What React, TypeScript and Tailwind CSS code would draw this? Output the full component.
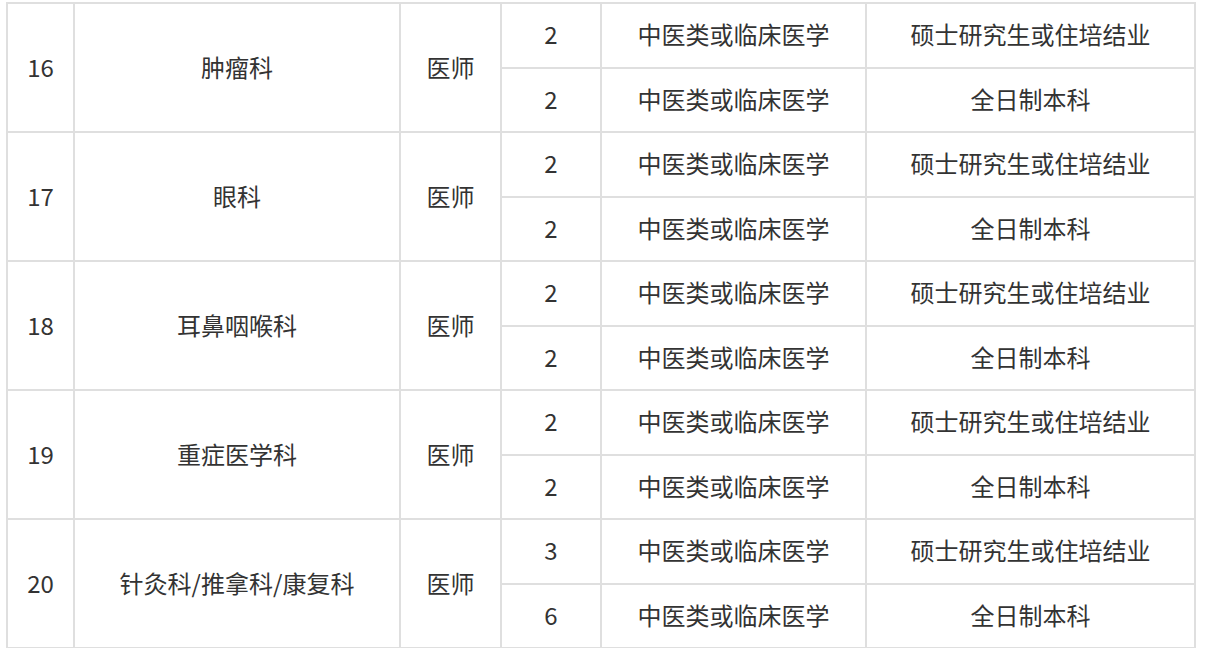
import React from "react";

type Group = {
  no: string;
  dept: string;
  role: string;
  rows: { count: string; major: string; edu: string }[];
};

const groups: Group[] = [
  {
    no: "16",
    dept: "肿瘤科",
    role: "医师",
    rows: [
      { count: "2", major: "中医类或临床医学", edu: "硕士研究生或住培结业" },
      { count: "2", major: "中医类或临床医学", edu: "全日制本科" },
    ],
  },
  {
    no: "17",
    dept: "眼科",
    role: "医师",
    rows: [
      { count: "2", major: "中医类或临床医学", edu: "硕士研究生或住培结业" },
      { count: "2", major: "中医类或临床医学", edu: "全日制本科" },
    ],
  },
  {
    no: "18",
    dept: "耳鼻咽喉科",
    role: "医师",
    rows: [
      { count: "2", major: "中医类或临床医学", edu: "硕士研究生或住培结业" },
      { count: "2", major: "中医类或临床医学", edu: "全日制本科" },
    ],
  },
  {
    no: "19",
    dept: "重症医学科",
    role: "医师",
    rows: [
      { count: "2", major: "中医类或临床医学", edu: "硕士研究生或住培结业" },
      { count: "2", major: "中医类或临床医学", edu: "全日制本科" },
    ],
  },
  {
    no: "20",
    dept: "针灸科/推拿科/康复科",
    role: "医师",
    rows: [
      { count: "3", major: "中医类或临床医学", edu: "硕士研究生或住培结业" },
      { count: "6", major: "中医类或临床医学", edu: "全日制本科" },
    ],
  },
];

// 单元格：居中，略微上移
const cell = "bg-white flex items-center justify-center pb-[2px]";

const App: React.FC = () => {
  return (
    <div className="w-[1205px] h-[648px] overflow-hidden bg-white text-[#333333] text-[24px] font-['Noto_Sans_CJK_SC','Noto_Sans',sans-serif]">
      <div className="mt-[2px] ml-[6px] w-fit grid grid-cols-[65px_324px_99px_98px_263px_327px] auto-rows-[62.5px] gap-[2px] p-[2px] bg-[#dfdfdf]">
        {groups.map((g) => (
          <React.Fragment key={g.no}>
            <div className={`${cell} row-span-2`}>{g.no}</div>
            <div className={`${cell} row-span-2`}>{g.dept}</div>
            <div className={`${cell} row-span-2`}>{g.role}</div>
            {g.rows.map((r, i) => (
              <React.Fragment key={i}>
                <div className={cell}>{r.count}</div>
                <div className={cell}>{r.major}</div>
                <div className={cell}>{r.edu}</div>
              </React.Fragment>
            ))}
          </React.Fragment>
        ))}
      </div>
    </div>
  );
};

export default App;
